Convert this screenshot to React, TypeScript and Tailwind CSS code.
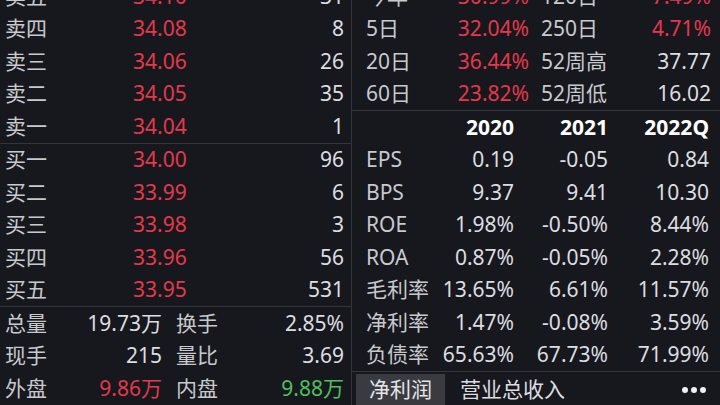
const FONT = { fontFamily: '"Noto Sans", "Noto Sans CJK SC", sans-serif' };

const RED = "text-[#e2394b]";
const GREEN = "text-[#4fbf5f]";

type Level = { label: string; price: string; qty: string };

const asks: Level[] = [
  { label: "卖五", price: "34.10", qty: "31" },
  { label: "卖四", price: "34.08", qty: "8" },
  { label: "卖三", price: "34.06", qty: "26" },
  { label: "卖二", price: "34.05", qty: "35" },
  { label: "卖一", price: "34.04", qty: "1" },
];

const bids: Level[] = [
  { label: "买一", price: "34.00", qty: "96" },
  { label: "买二", price: "33.99", qty: "6" },
  { label: "买三", price: "33.98", qty: "3" },
  { label: "买四", price: "33.96", qty: "56" },
  { label: "买五", price: "33.95", qty: "531" },
];

const summary = [
  { a: "总量", av: "19.73万", ac: "text-[#dcdde0]", b: "换手", bv: "2.85%", bc: "text-[#dcdde0]" },
  { a: "现手", av: "215", ac: "text-[#dcdde0]", b: "量比", bv: "3.69", bc: "text-[#dcdde0]" },
  { a: "外盘", av: "9.86万", ac: RED, b: "内盘", bv: "9.88万", bc: GREEN },
];

const changes = [
  { a: "今年", av: "30.99%", b: "120日", bv: "7.49%", bRed: true },
  { a: "5日", av: "32.04%", b: "250日", bv: "4.71%", bRed: true },
  { a: "20日", av: "36.44%", b: "52周高", bv: "37.77", bRed: false },
  { a: "60日", av: "23.82%", b: "52周低", bv: "16.02", bRed: false },
];

const finance = [
  ["EPS", "0.19", "-0.05", "0.84"],
  ["BPS", "9.37", "9.41", "10.30"],
  ["ROE", "1.98%", "-0.50%", "8.44%"],
  ["ROA", "0.87%", "-0.05%", "2.28%"],
  ["毛利率", "13.65%", "6.61%", "11.57%"],
  ["净利率", "1.47%", "-0.08%", "3.59%"],
  ["负债率", "65.63%", "67.73%", "71.99%"],
];

function LevelRow({ level }: { level: Level }) {
  return (
    <div className="flex h-[32.5px] items-center pl-[5px] pr-[7px]">
      <span className="w-[128px] text-[#c8c9cd]">{level.label}</span>
      <span className={RED}>{level.price}</span>
      <span className="flex-1 text-right text-[#dcdde0]">{level.qty}</span>
    </div>
  );
}

export default function App() {
  return (
    <div
      className="flex h-[405px] w-[720px] overflow-hidden bg-[#17181d] text-[21px] leading-none"
      style={FONT}
    >
      <div className="w-[352px] shrink-0 border-r border-[#34353b]">
        <div className="mt-[-20px]">
          <div className="border-b border-[#34353b]">
            {asks.map((l) => (
              <LevelRow key={l.label} level={l} />
            ))}
          </div>
          <div className="border-b border-[#34353b]">
            {bids.map((l) => (
              <LevelRow key={l.label} level={l} />
            ))}
          </div>
          {summary.map((r) => (
            <div
              key={r.a}
              className="grid h-[32.5px] grid-cols-[157px_1fr] items-center gap-[14px] pl-[5px] pr-[7px]"
            >
              <div className="flex justify-between">
                <span className="text-[#c8c9cd]">{r.a}</span>
                <span className={r.ac}>{r.av}</span>
              </div>
              <div className="flex justify-between">
                <span className="text-[#c8c9cd]">{r.b}</span>
                <span className={r.bc}>{r.bv}</span>
              </div>
            </div>
          ))}
        </div>
      </div>

      <div className="flex min-w-0 flex-1 flex-col">
        <div className="mt-[-20px] border-b border-[#34353b]">
          {changes.map((r) => (
            <div
              key={r.a}
              className="grid h-[32.5px] grid-cols-[163px_1fr] items-center gap-[12px] pl-[14px] pr-[9px]"
            >
              <div className="flex justify-between">
                <span className="text-[#c8c9cd]">{r.a}</span>
                <span className={RED}>{r.av}</span>
              </div>
              <div className="flex justify-between">
                <span className="text-[#c8c9cd]">{r.b}</span>
                <span className={r.bRed ? RED : "text-[#dcdde0]"}>{r.bv}</span>
              </div>
            </div>
          ))}
        </div>

        <div className="border-b border-[#34353b] pl-[14px]">
          <div className="grid h-[32.5px] grid-cols-[72px_76px_94px_101px] items-center font-bold text-white">
            <span />
            <span className="text-right">2020</span>
            <span className="text-right">2021</span>
            <span className="text-right">2022Q</span>
          </div>
          {finance.map((row) => (
            <div
              key={row[0]}
              className="grid h-[32.5px] grid-cols-[72px_76px_94px_101px] items-center"
            >
              <span className="text-[#c8c9cd]">{row[0]}</span>
              <span className="text-right text-[#dcdde0]">{row[1]}</span>
              <span className="text-right text-[#dcdde0]">{row[2]}</span>
              <span className="text-right text-[#dcdde0]">{row[3]}</span>
            </div>
          ))}
        </div>

        <div className="flex flex-1 items-stretch pt-[2px]">
          <div className="ml-[4px] flex w-[89px] items-center justify-center bg-[#3a3b41] text-[#e4e5e8]">
            净利润
          </div>
          <div className="ml-[15px] flex items-center text-[#dcdde0]">营业总收入</div>
          <div className="ml-auto flex items-center gap-[3px] pr-[14px]">
            <span className="h-[6px] w-[6px] rounded-full bg-[#eef0f6]" />
            <span className="h-[6px] w-[6px] rounded-full bg-[#eef0f6]" />
            <span className="h-[6px] w-[6px] rounded-full bg-[#eef0f6]" />
          </div>
        </div>
      </div>
    </div>
  );
}
